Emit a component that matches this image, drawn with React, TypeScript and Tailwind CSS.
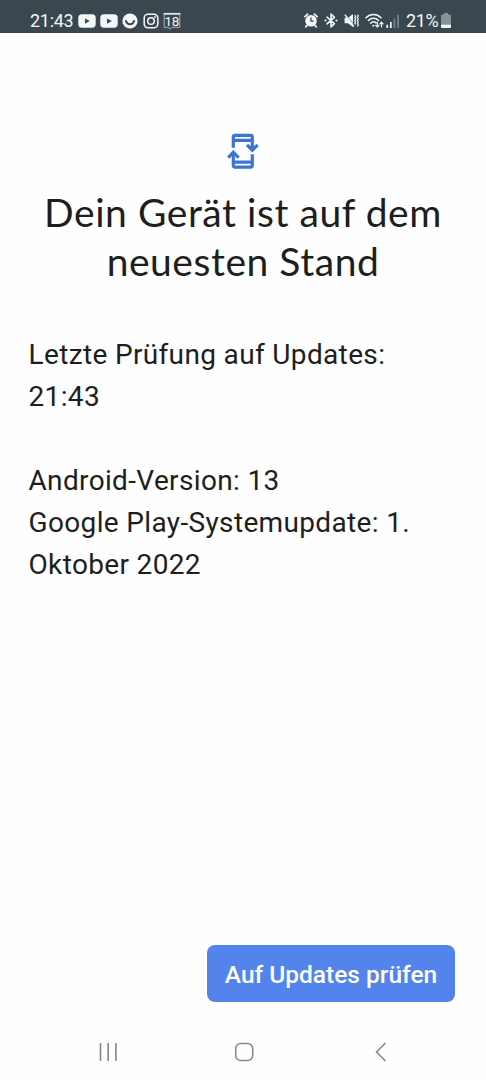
import type { ReactNode } from 'react';

function YouTubeIcon() {
  return (
    <svg className="w-[18px] h-[14px]" viewBox="0 0 18 14">
      <rect x="0.3" y="0.3" width="17.4" height="13.4" rx="3.6" fill="#f4f7f8" />
      <path d="M7 4.4v5.400l4.800-2.700z" fill="#3a474e" />
    </svg>
  );
}

function SmileIcon() {
  return (
    <svg className="w-[16px] h-[16px]" viewBox="0 0 16 16">
      <circle cx="8" cy="8" r="7.6" fill="#f4f7f8" />
      <path d="M3.900 8c.8 2.300 2.300 3.200 4.100 3.200s3.300-.9 4.100-3.200" fill="none" stroke="#3a474e" strokeWidth="2" strokeLinecap="round" />
    </svg>
  );
}

function InstagramIcon() {
  return (
    <svg className="w-[16px] h-[16px]" viewBox="0 0 16 16" fill="none" stroke="#f4f7f8" strokeWidth="1.5">
      <rect x="1.2" y="1.2" width="13.6" height="13.6" rx="3.8" />
      <circle cx="8" cy="8" r="3.3" />
      <circle cx="12" cy="4" r="0.9" fill="#f4f7f8" stroke="none" />
    </svg>
  );
}

function CalendarIcon() {
  return (
    <svg className="w-[18px] h-[18px]" viewBox="0 0 18 18">
      <path d="M5.500 15.300H1.200V1.600h15.600v13.700H9l-2.200 1.900-1.300-1.900" fill="none" stroke="#aab4b8" strokeWidth="1" />
      <path d="M.7.900h16.600v1.800H.7z" fill="#dfe4e6" />
      <text x="8.800" y="13.800" textAnchor="middle" fontSize="13.500" letterSpacing="-0.4" fill="#f4f7f8">18</text>
    </svg>
  );
}

function AlarmIcon() {
  return (
    <svg className="w-[14px] h-[15px]" viewBox="0 0 14 15">
      <circle cx="7" cy="7.800" r="5.800" fill="#f4f7f8" />
      <path d="M.9 3.700 3.700 1.200M13.100 3.700l-2.800-2.500M3 12.200l-1.300 1.700M11 12.200l1.300 1.700" stroke="#f4f7f8" strokeWidth="1.700" strokeLinecap="round" />
      <path d="M7 4.500v3.600h2.700" fill="none" stroke="#3a474e" strokeWidth="1.300" />
    </svg>
  );
}

function BluetoothIcon() {
  return (
    <svg className="w-[14px] h-[15px]" viewBox="0 0 14 15">
      <path d="m3 4.200 7.400 6.400L7 13.900V1.100l3.400 3.300L3 10.800" fill="none" stroke="#f4f7f8" strokeWidth="1.600" strokeLinejoin="round" strokeLinecap="round" />
      <circle cx="1.500" cy="7.500" r="1.100" fill="#f4f7f8" />
      <circle cx="12.500" cy="7.500" r="1.100" fill="#f4f7f8" />
    </svg>
  );
}

function MuteIcon() {
  return (
    <svg className="w-[15px] h-[15px]" viewBox="0 0 15 15">
      <path d="M.6 4.700h3.400L9 1v13L4 10.300H.6z" fill="#f4f7f8" />
      <path d="m2.100 1.600 7.800 10.200" stroke="#3a474e" strokeWidth="0.700" />
      <path d="m.9 1.700 8.900 11.800" stroke="#f4f7f8" strokeWidth="1.400" />
      <path d="m10.700 2.200 1 1.300-1 1.300 1 1.300-1 1.300 1 1.300-1 1.300 1 1.300M13.400 1.500l.9 1.500-.9 1.500.9 1.500-.9 1.500.9 1.500-.9 1.500.9 1.500-.9 1.300" fill="none" stroke="#f4f7f8" strokeWidth="1.200" />
    </svg>
  );
}

function WifiIcon() {
  return (
    <svg className="w-[19px] h-[15px]" viewBox="0 0 19 15" fill="none" stroke="#f4f7f8" strokeWidth="1.500" strokeLinecap="round">
      <path d="M1 4.800c4.200-4.300 10.800-4.300 15 0M3.400 7.500c2.900-2.900 7.300-2.900 10.200 0M5.800 10.100c1.500-1.500 3.700-1.500 5.200-.2" />
      <path d="M8.200 12.700h.2" strokeWidth="1.900" />
      <path d="M12.300 9.200v4.600m-1.700-1.500 1.700 1.700 1.700-1.700M16.500 13.800V9.200m-1.600 1.600 1.600-1.700 1.600 1.700" strokeWidth="1.200" />
    </svg>
  );
}

function SignalIcon() {
  return (
    <svg className="w-[14px] h-[14px]" viewBox="0 0 14 14">
      <path d="M.4 10.800h1.700V14H.4zM4 8h1.700v6H4z" fill="#f4f7f8" />
      <path d="M7.600 4.500h1.700V14H7.600zM11.200.8h1.700V14h-1.700z" fill="#74838a" />
    </svg>
  );
}

function BatteryIcon() {
  return (
    <svg className="w-[10px] h-[15px]" viewBox="0 0 10 15">
      <path d="M3 0h4v1.500h1.500A1.500 1.500 0 0 1 10 3v10.500A1.500 1.500 0 0 1 8.500 15h-7A1.500 1.500 0 0 1 0 13.500V3a1.500 1.500 0 0 1 1.500-1.500H3z" fill="#88949a" />
      <path d="M0 11.800h10v1.700A1.500 1.500 0 0 1 8.500 15h-7A1.500 1.500 0 0 1 0 13.500z" fill="#f4f7f8" />
    </svg>
  );
}

function UpdateIcon() {
  return (
    <svg className="w-[32px] h-[36px]" viewBox="0 0 32 36" fill="none" stroke="#3c74d6" strokeWidth="3.200">
      <path d="M6.300 14.700V4.200a1.800 1.800 0 0 1 1.800-1.800h15.400a1.800 1.800 0 0 1 1.800 1.800v13M6.300 7.400h19" />
      <path d="m20 11.900 5.300 5.300 5.300-5.300" />
      <path d="M25.300 21.300v11a1.800 1.800 0 0 1-1.800 1.800H8.100a1.800 1.800 0 0 1-1.800-1.800v-13M6.300 29.100h19" />
      <path d="m1.200 24.600 5.100-5.300 5.300 5.300" />
    </svg>
  );
}

function NavButton({ label, children }: { label: string; children: ReactNode }) {
  return (
    <button aria-label={label} className="flex w-[136px] items-center justify-center">
      {children}
    </button>
  );
}

function StatusBar() {
  return (
    <header className="flex h-[33px] items-center justify-between bg-[#3a474e] pt-2 pr-[35px] pl-[30px] text-[18px] leading-[24px] text-[#f4f7f8]">
      <div className="flex items-center">
        <span className="mr-[5px] w-[43px] whitespace-nowrap tracking-[-0.3px]">21:43</span>
        <div className="flex items-center gap-[4px]">
          <YouTubeIcon />
          <YouTubeIcon />
          <SmileIcon />
          <span className="ml-px flex items-center gap-[4px]">
            <InstagramIcon />
            <CalendarIcon />
          </span>
        </div>
      </div>
      <div className="flex items-center">
        <div className="flex items-center gap-[6px]">
          <AlarmIcon />
          <BluetoothIcon />
          <MuteIcon />
          <WifiIcon />
        </div>
        <span className="ml-[2px]">
          <SignalIcon />
        </span>
        <span className="mr-[2px] ml-[6px] w-[33px] whitespace-nowrap tracking-[-0.4px]">21%</span>
        <BatteryIcon />
      </div>
    </header>
  );
}

export default function App() {
  return (
    <div className="flex h-[1080px] w-[486px] flex-col bg-[#fefefe] font-['Roboto',sans-serif] text-[#1d1e20]">
      <StatusBar />

      <main className="flex flex-1 flex-col">
        <div className="flex justify-center pt-[100px]">
          <UpdateIcon />
        </div>
        <h1 className="mt-[19px] text-center font-['Lato',sans-serif] text-[39px] leading-[49px] tracking-[0.55px]">
          <span className="block whitespace-nowrap">Dein Gerät ist auf dem</span>
          <span className="block whitespace-nowrap">neuesten Stand</span>
        </h1>

        <div className="mt-[48px] pl-[28.5px] text-[28px] leading-[41.9px] tracking-[0.35px] whitespace-nowrap">
          <p>
            Letzte Prüfung auf Updates:
            <br />
            21:43
          </p>
          <p className="mt-[42px]">
            Android-Version: 13
            <br />
            Google Play-Systemupdate: 1.
            <br />
            Oktober 2022
          </p>
        </div>

        <div className="mt-auto flex justify-end pr-[31px] pb-[22px]">
          <button className="flex h-[57px] w-[248px] items-center justify-center rounded-[8px] bg-[#5284ec] pt-[4px] text-[24.5px] font-medium whitespace-nowrap text-white">
            Auf Updates prüfen
          </button>
        </div>
      </main>

      {/* System navigation */}
      <nav className="flex h-[56px] items-center justify-center pl-[2px]">
        <NavButton label="Recents">
          <svg className="w-[20px] h-[20px]" viewBox="0 0 20 20" stroke="#858585" strokeWidth="1.600">
            <path d="M2.500 1v18M10.200 1v18M17.900 1v18" />
          </svg>
        </NavButton>
        <NavButton label="Home">
          <svg className="w-[20px] h-[20px]" viewBox="0 0 20 20" fill="none" stroke="#858585" strokeWidth="1.500">
            <rect x="1.700" y="1.500" width="17" height="17" rx="5" />
          </svg>
        </NavButton>
        <NavButton label="Back">
          <svg className="w-[20px] h-[20px]" viewBox="0 0 20 20" fill="none" stroke="#858585" strokeWidth="1.500">
            <path d="M15.500 1 6.500 10l9 9" />
          </svg>
        </NavButton>
      </nav>
    </div>
  );
}
